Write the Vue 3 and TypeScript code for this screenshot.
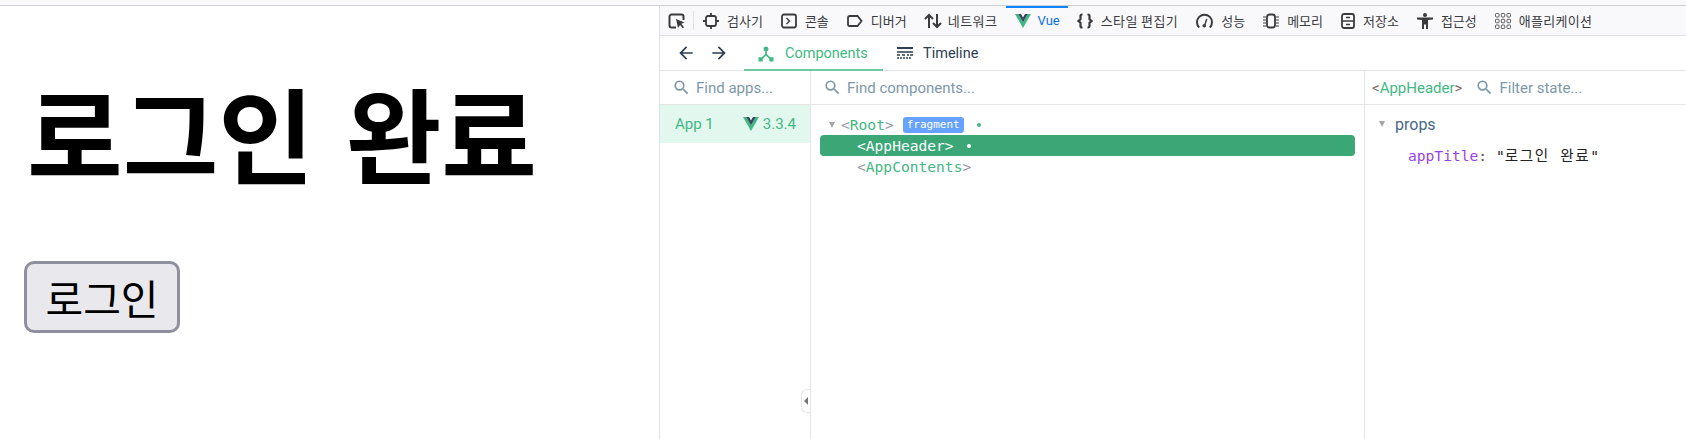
<script setup lang="ts">
const searchPath = 'M15.5 14h-.79l-.28-.27A6.47 6.47 0 0 0 16 9.5 6.5 6.5 0 1 0 9.5 16c1.61 0 3.09-.59 4.23-1.57l.27.28v.79l5 4.99L20.49 19l-4.99-5zm-6 0C7.01 14 5 11.99 5 9.5S7.01 5 9.5 5 14 7.01 14 9.5 11.99 14 9.5 14z'
const hubPath = 'M17 16l-4-4V8.82C14.16 8.4 15 7.3 15 6c0-1.66-1.34-3-3-3S9 4.34 9 6c0 1.3.84 2.4 2 2.82V12l-4 4H3v5h5v-3.05l4-4.2 4 4.2V21h5v-5h-4z'
</script>

<template>
  <div class="page">
    <div class="chrome-strip"></div>
    <div class="main">
      <section class="site">
        <h1 class="title">로그인 완료</h1>
        <button class="login" type="button">로그인</button>
      </section>
      <section class="devtools">
        <nav class="toolbar">
          <div class="pick">
            <svg width="18" height="18" viewBox="0 0 18 18" fill="none" stroke="#3b3b3f" stroke-width="2"><path d="M8 15.500H3.500a2 2 0 0 1-2-2v-9a2 2 0 0 1 2-2h10a2 2 0 0 1 2 2V8"/><path d="M8 7l8.500 3.400-3.200 1.300 2.700 3.600-1.300 1-2.600-3.400L10 16z" fill="#3b3b3f" stroke="none"/></svg>
          </div>
          <div class="tool">
            <svg width="16" height="16" viewBox="0 0 16 16" fill="none" stroke="#3b3b3f" stroke-width="1.800"><rect x="3" y="3" width="10" height="10" rx="2"/><path d="M8 0v3M8 13v3M0 8h3M13 8h3"/></svg>
            <span>검사기</span>
          </div>
          <div class="tool">
            <svg width="16" height="16" viewBox="0 0 16 16" fill="none" stroke="#3b3b3f" stroke-width="1.800"><rect x="1" y="1.500" width="14" height="13" rx="2"/><path d="M5.500 5l3 3-3 3" stroke-width="1.400"/></svg>
            <span>콘솔</span>
          </div>
          <div class="tool">
            <svg width="16" height="16" viewBox="0 0 16 16" fill="none" stroke="#3b3b3f" stroke-width="1.800"><path d="M2.500 3h8l4 5-4 5h-8a1.500 1.500 0 0 1-1.500-1.500v-7A1.500 1.500 0 0 1 2.500 3z"/></svg>
            <span>디버거</span>
          </div>
          <div class="tool tool-net">
            <svg width="18" height="16" viewBox="0 0 18 16" fill="none" stroke="#3b3b3f" stroke-width="2"><path d="M5 15V2M1 6l4-4 4 4M13 1v13M9 10l4 4 4-4"/></svg>
            <span>네트워크</span>
          </div>
          <div class="tool vue-tab">
            <svg width="16" height="14" viewBox="0 0 16 14"><path d="M0 0h3.200L8 8.300 12.800 0H16L8 14z" fill="#41b883"/><path d="M3.200 0H6l2 3.500L10 0h2.800L8 8.300z" fill="#35495e"/></svg>
            <span>Vue</span>
          </div>
          <div class="tool tool-style">
            <svg width="16" height="16" viewBox="0 0 16 16" fill="none" stroke="#3b3b3f" stroke-width="2.200"><path d="M5.500 1.500H5A1.500 1.500 0 0 0 3.500 3v3.200L1.500 8l2 1.800V13A1.500 1.500 0 0 0 5 14.500h.5M10.500 1.500h.5A1.500 1.500 0 0 1 12.500 3v3.200l2 1.800-2 1.800V13a1.500 1.500 0 0 1-1.500 1.500h-.5"/></svg>
            <span>스타일 편집기</span>
          </div>
          <div class="tool">
            <svg width="17" height="16" viewBox="0 0 17 16" fill="none" stroke="#3b3b3f" stroke-width="2"><path d="M3.200 14.500a7.500 7.500 0 1 1 10.600 0"/><path d="M10.800 6l-2 6" stroke-width="1.400"/><circle cx="8.300" cy="12.800" r="1.800" fill="#3b3b3f" stroke="none"/></svg>
            <span>성능</span>
          </div>
          <div class="tool">
            <svg width="16" height="16" viewBox="0 0 16 16" fill="none" stroke="#3b3b3f" stroke-width="1.800"><rect x="4" y="1.500" width="8" height="13" rx="2.500"/><path d="M0 4h3M0 7h3M0 10h3M0 13h3M13 4h3M13 7h3M13 10h3M13 13h3" stroke-width="1"/></svg>
            <span>메모리</span>
          </div>
          <div class="tool">
            <svg width="14" height="16" viewBox="0 0 14 16" fill="none" stroke="#3b3b3f" stroke-width="1.800"><rect x="1" y="1" width="12" height="14" rx="2"/><path d="M1 8h12M5 4.500h4M5 11.500h4" stroke-width="1.400"/></svg>
            <span>저장소</span>
          </div>
          <div class="tool">
            <svg width="16" height="16" viewBox="0 0 16 16" fill="#3b3b3f"><circle cx="8" cy="2" r="2"/><path d="M0 4.500h16V6.500l-5 .5V16H9V11.500H7V16H5V7L0 6.500z"/></svg>
            <span>접근성</span>
          </div>
          <div class="tool tool-apps">
            <svg width="16" height="16" viewBox="0 0 16 16" fill="none" stroke="#5b5b60" stroke-width="1"><rect x="0.500" y="0.500" width="3.500" height="3.500" rx=".8"/><rect x="6.250" y="0.500" width="3.500" height="3.500" rx=".8"/><rect x="12" y="0.500" width="3.500" height="3.500" rx=".8"/><rect x="0.500" y="6.250" width="3.500" height="3.500" rx=".8"/><rect x="6.250" y="6.250" width="3.500" height="3.500" rx=".8"/><rect x="12" y="6.250" width="3.500" height="3.500" rx=".8"/><rect x="0.500" y="12" width="3.500" height="3.500" rx=".8"/><rect x="6.250" y="12" width="3.500" height="3.500" rx=".8"/><rect x="12" y="12" width="3.500" height="3.500" rx=".8"/></svg>
            <span>애플리케이션</span>
          </div>
        </nav>

        <div class="subnav">
          <div class="arrows">
            <svg width="20" height="20" viewBox="0 0 24 24" fill="#2c3e50"><path d="M20 11H7.830l5.590-5.590L12 4l-8 8 8 8 1.410-1.410L7.830 13H20v-2z"/></svg>
            <svg width="20" height="20" viewBox="0 0 24 24" fill="#2c3e50"><path d="M4 11h12.170l-5.590-5.590L12 4l8 8-8 8-1.410-1.410L16.170 13H4v-2z"/></svg>
          </div>
          <div class="tab tab-active">
            <svg width="20" height="20" viewBox="0 0 24 24" fill="#42b883"><path :d="hubPath"/></svg>
            <span>Components</span>
          </div>
          <div class="tab tab-time">
            <svg width="16" height="16" viewBox="0 0 16 16" fill="none" stroke="#2c3e50"><path d="M0 3h16" stroke-width="2"/><path d="M0 7h16M0 10h3M5 10h3M10 10h2M13 10h3M0 13h2M3 13h2M6 13h2M9 13h2M12 13h2" stroke-width="1.400"/></svg>
            <span>Timeline</span>
          </div>
        </div>

        <div class="panes">
          <aside class="apps">
            <div class="search">
              <svg width="19" height="19" viewBox="0 0 24 24" fill="#7b97a8"><path :d="searchPath"/></svg>
              <span>Find apps...</span>
            </div>
            <div class="app-row">
              <span>App 1</span>
              <span class="version">
                <svg width="16" height="14" viewBox="0 0 16 14"><path d="M0 0h3.200L8 8.300 12.800 0H16L8 14z" fill="#41b883"/><path d="M3.200 0H6l2 3.500L10 0h2.800L8 8.300z" fill="#35495e"/></svg>
                3.3.4
              </span>
            </div>
            <div class="collapse"><i></i></div>
          </aside>

          <div class="tree-pane">
            <div class="search">
              <svg width="19" height="19" viewBox="0 0 24 24" fill="#7b97a8"><path :d="searchPath"/></svg>
              <span>Find components...</span>
            </div>
            <div class="tree">
              <div class="node root">
                <i class="caret"></i>
                <span class="br">&lt;</span><span class="cn">Root</span><span class="br">&gt;</span>
                <span class="badge">fragment</span>
                <b class="dot"></b>
              </div>
              <div class="node child selected">
                <span>&lt;AppHeader&gt;</span>
                <b class="dot"></b>
              </div>
              <div class="node child">
                <span class="br">&lt;</span><span class="cn">AppContents</span><span class="br">&gt;</span>
              </div>
            </div>
          </div>

          <div class="state-pane">
            <div class="search state-search">
              <span class="comp"><em>&lt;</em>AppHeader<em>&gt;</em></span>
              <svg width="19" height="19" viewBox="0 0 24 24" fill="#7b97a8"><path :d="searchPath"/></svg>
              <span>Filter state...</span>
            </div>
            <div class="state">
              <div class="props-head"><i class="caret"></i><span>props</span></div>
              <div class="prop"><span class="key">appTitle</span><span class="colon">:</span> <span class="val">"<span class="ko">로그인 완료</span>"</span></div>
            </div>
          </div>
        </div>
      </section>
    </div>
  </div>
</template>

<style>
html, body { margin: 0; background: #fff; overflow: hidden; }
</style>

<style scoped>
.page { width: 1686px; height: 439px; display: flex; flex-direction: column; overflow: hidden; font-family: Roboto, "Noto Sans CJK KR", sans-serif; }
.chrome-strip { height: 5px; background: #f9f9fb; border-bottom: 1px solid #cfcfd8; flex: none; }
.main { flex: 1; display: flex; min-height: 0; }
.site { flex: none; border-right: 1px solid #e0e0e2; padding: 0 0 0 24px; width: 635px; }
.title { margin: 58px 0 0 3px; font: 700 104px/1.3 "Noto Sans CJK KR", sans-serif; word-spacing: 8px; color: #000; white-space: nowrap; }
.login { display: block; margin-top: 62px; width: 156px; height: 72px; padding: 0; background: #e9e9ed; border: 3px solid #8f8f9d; border-radius: 10px; font: 400 41px/1 "Noto Sans CJK KR", sans-serif; color: #000; }
.devtools { flex: 1; min-width: 0; display: flex; flex-direction: column; }
.toolbar { height: 29px; background: #f9f9fb; border-bottom: 1px solid #e0e0e2; display: flex; align-items: stretch; flex: none; font: 400 13px "Noto Sans CJK KR", sans-serif; color: #3b3b3f; }
.pick { width: 34px; display: flex; align-items: center; padding-left: 8px; box-sizing: border-box; position: relative; }
.pick::after { content: ""; position: absolute; right: 0; top: 5px; bottom: 5px; width: 1px; background: #e0e0e2; }
.tool { display: flex; align-items: center; gap: 8px; padding: 0 9px; white-space: nowrap; }
.tool-net { gap: 6px; padding-left: 8px; padding-right: 8px; letter-spacing: 0.5px; }
.tool-style { letter-spacing: 0.4px; }
.tool-apps { letter-spacing: 0.3px; }
.vue-tab { position: relative; gap: 7px; padding-right: 8px; color: #0a6ee8; font-family: Roboto, sans-serif; letter-spacing: 0; }
.vue-tab::before { content: ""; position: absolute; left: 0; right: 0; top: 0; height: 2px; background: #0a84ff; }
.subnav { height: 34px; flex: none; display: flex; border-bottom: 1px solid #e5e5e5; font: 400 14.5px Roboto, sans-serif; color: #2c3e50; }
.arrows { width: 84px; display: flex; align-items: center; gap: 13px; padding-left: 16px; box-sizing: border-box; }
.tab { display: flex; align-items: center; gap: 9px; padding: 0 12px; }
.tab-time { gap: 10px; padding-left: 14px; }
.tab-active { width: 139px; box-sizing: border-box; padding-top: 2px; color: #42b883; border-bottom: 2px solid #6fcb9f; margin-bottom: -1px; }
.panes { flex: 1; display: flex; min-height: 0; }
.apps { width: 150px; flex: none; border-right: 1px solid #e5e5e5; position: relative; }
.tree-pane { width: 553px; flex: none; border-right: 1px solid #e5e5e5; }
.state-pane { flex: 1; min-width: 0; }
.search { height: 33px; display: flex; align-items: center; gap: 5px; padding-left: 12px; border-bottom: 1px solid #e5e5e5; font-size: 15px; color: #7d98aa; }
.state-search { padding-left: 7px; }
.comp { color: #42b883; margin-right: 8px; }
.comp em { font-style: normal; color: #7a6a5f; }
.app-row { height: 38px; background: #e2f7ee; color: #42b883; display: flex; align-items: center; justify-content: space-between; padding: 0 14px 0 15px; font-size: 15px; }
.version { display: flex; align-items: center; gap: 4px; }
.collapse { position: absolute; right: 0; top: 318px; width: 9px; height: 24px; box-sizing: border-box; border: 1px solid #e5e5e5; border-right: 0; border-radius: 6px 0 0 6px; display: flex; align-items: center; justify-content: center; }
.collapse i { width: 0; height: 0; border-style: solid; border-width: 4px 4px 4px 0; border-color: transparent #777 transparent transparent; }
.tree { padding: 9px 9px 0 9px; font: 400 14.6px/21px "DejaVu Sans Mono", "Noto Sans CJK KR", monospace; }
.node { height: 21px; display: flex; align-items: center; white-space: nowrap; }
.root { padding-left: 9px; }
.child { padding-left: 37px; }
.caret { width: 0; height: 0; border-style: solid; border-width: 6px 3.5px 0; border-color: #a6a6a6 transparent transparent; margin-right: 6px; flex: none; }
.br { color: #97979f; }
.cn { color: #42b883; }
.selected { background: #3ba776; color: #fff; border-radius: 4px; }
.badge { margin-left: 9px; height: 16px; width: 61px; text-align: center; background: #66a2ff; color: #fff; border-radius: 3px; font-size: 11px; line-height: 16px; }
.dot { width: 4px; height: 4px; border-radius: 50%; background: #42b883; margin-left: 13px; }
.selected .dot { background: #fff; }
.state { padding: 7px 0 0 14px; }
.props-head { height: 24px; display: flex; align-items: center; font-size: 16px; color: #486887; }
.props-head .caret { margin-right: 10px; }
.prop { margin: 8px 0 0 29px; font: 400 14.6px/24px "DejaVu Sans Mono", "Noto Sans CJK KR", monospace; white-space: nowrap; }
.key { color: #9a3fe8; }
.colon { color: #555; }
.val { color: #222; }
.ko { letter-spacing: 1.6px; }
</style>
